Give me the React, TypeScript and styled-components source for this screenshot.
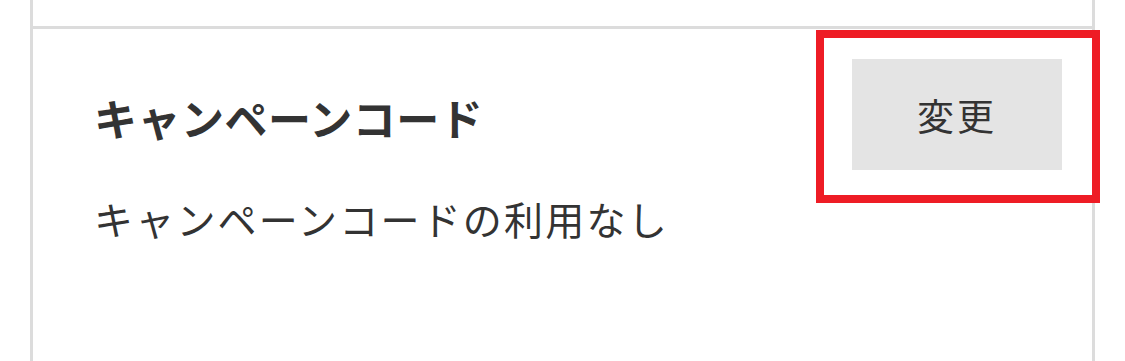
import styled, { createGlobalStyle } from 'styled-components';

const GlobalStyle = createGlobalStyle`
  html, body {
    margin: 0;
    padding: 0;
    background: #ffffff;
  }
  body {
    font-family: 'Noto Sans CJK JP', 'Noto Sans', sans-serif;
    color: #333333;
  }
`;

const Card = styled.div`
  margin-left: 30px;
  width: 1065px;
  height: 361px;
  box-sizing: border-box;
  border-left: 3px solid #dcdcdc;
  border-right: 3px solid #dcdcdc;
  display: flex;
  flex-direction: column;
`;

const PrevSection = styled.div`
  height: 26px;
  border-bottom: 3px solid #dcdcdc;
`;

const Section = styled.div`
  flex: 1;
  display: flex;
  justify-content: space-between;
  align-items: flex-start;
  padding: 30px 30px 0 61px;
`;

const Info = styled.div`
  display: flex;
  flex-direction: column;
  padding-top: 33px;
`;

const Title = styled.h3`
  margin: 0;
  font-size: 43px;
  line-height: 1.2;
  font-weight: 700;
  letter-spacing: 0.5px;
  color: #333333;
`;

const Detail = styled.p`
  margin: 51px 0 0;
  font-size: 39px;
  line-height: 1.2;
  letter-spacing: 2.2px;
  color: #333333;
`;

const ButtonWrap = styled.div`
  position: relative;
`;

const ChangeButton = styled.button`
  width: 210px;
  height: 111px;
  border: none;
  background: #e4e4e4;
  color: #333333;
  font-family: 'Noto Sans CJK JP', 'Noto Sans', sans-serif;
  font-size: 37px;
  letter-spacing: 3px;
  padding: 0;
  cursor: pointer;
`;

const Highlight = styled.div`
  position: absolute;
  top: -29px;
  left: -36px;
  right: -38px;
  bottom: -33px;
  border: 8px solid #ee1c25;
  pointer-events: none;
`;

const App = () => {
  return (
    <>
      <GlobalStyle />
      <Card>
        <PrevSection />
        <Section>
          <Info>
            <Title>キャンペーンコード</Title>
            <Detail>キャンペーンコードの利用なし</Detail>
          </Info>
          <ButtonWrap>
            <ChangeButton>変更</ChangeButton>
            <Highlight />
          </ButtonWrap>
        </Section>
      </Card>
    </>
  );
};

export default App;
